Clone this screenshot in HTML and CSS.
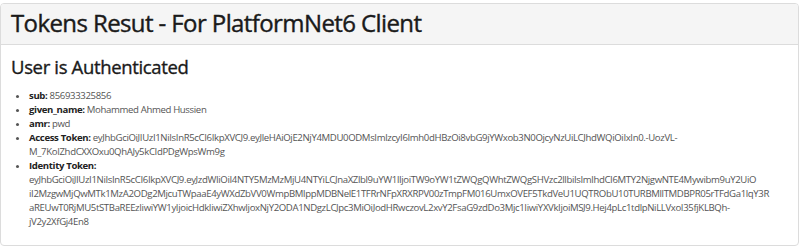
FILE: index.html
```html
<!DOCTYPE html>
<html lang="en">
<head>
<meta charset="utf-8">
<title>Tokens Resut</title>
<link rel="stylesheet" href="styles.css">
</head>
<body>
<div class="card">
  <div class="card-header">
    <h1 class="title">Tokens Resut - For PlatformNet6 Client</h1>
  </div>
  <div class="card-body">
    <h2 class="subtitle">User is Authenticated</h2>
    <ul class="claims">
      <li><strong>sub:</strong> 856933325856</li>
      <li><strong>given_name:</strong> Mohammed Ahmed Hussien</li>
      <li><strong>amr:</strong> pwd</li>
      <li><strong>Access Token:</strong> <span class="tok">eyJhbGciOiJIUzI1NiIsInR5cCI6IkpXVCJ9.eyJleHAiOjE2NjY4MDU0ODMsImlzcyI6Imh0dHBzOi8vbG9jYWxob3N0OjcyNzUiLCJhdWQiOiIxIn0.-UozVL-</span><br><span class="tok">M_7KoIZhdCXXOxu0QhAJy5kCIdPDgWpsWm9g</span></li>
      <li><strong>Identity Token:</strong><br><span class="tok">eyJhbGciOiJIUzI1NiIsInR5cCI6IkpXVCJ9.eyJzdWIiOiI4NTY5MzMzMjU4NTYiLCJnaXZlbl9uYW1lIjoiTW9oYW1tZWQgQWhtZWQgSHVzc2llbiIsImlhdCI6MTY2NjgwNTE4Mywibm9uY2UiO</span><br><span class="tok">iI2MzgwMjQwMTk1MzA2ODg2MjcuTWpaaE4yWXdZbVV0WmpBMlppMDBNelE1TFRrNFpXRXRPV00zTmpFM016UmxOVEF5TkdVeU1UQTRObU10TURBMllTMDBPR05rTFdGa1lqY3R</span><br><span class="tok">aREUwT0RjMU5tSTBaREEzIiwiYW1yIjoicHdkIiwiZXhwIjoxNjY2ODA1NDgzLCJpc3MiOiJodHRwczovL2xvY2FsaG9zdDo3Mjc1IiwiYXVkIjoiMSJ9.Hej4pLc1tdlpNiLLVxoI35fjKLBQh-</span><br><span class="tok">jV2y2XfGj4En8</span></li>
    </ul>
  </div>
</div>
</body>
</html>
```

FILE: styles.css
```css
* { box-sizing: border-box; }
html, body { margin: 0; padding: 0; background: #fff; }
body {
  font-family: "Open Sans", "Noto Sans", sans-serif;
  color: #555;
}
.card {
  margin: 3px 1px 0 0;
  height: 243px;
  border: 1px solid #dcdcdc;
  border-radius: 4px;
  overflow: hidden;
}
.card-header {
  background: #f5f5f5;
  border-bottom: 1px solid #dcdcdc;
  padding: 4px 10px 7px;
}
.title {
  margin: 0;
  font-size: 24px;
  line-height: 29px;
  font-weight: 400;
  letter-spacing: -0.6px;
  color: #1a1a1a;
  -webkit-text-stroke: 0.4px #1a1a1a;
}
.card-body {
  padding: 11px 10px 0;
}
.subtitle {
  margin: 0;
  font-size: 18.5px;
  line-height: 22px;
  font-weight: 400;
  letter-spacing: -0.35px;
  color: #1a1a1a;
  -webkit-text-stroke: 0.35px #1a1a1a;
}
.claims {
  margin: 11px 0 0;
  padding-left: 18px;
  font-size: 9.6px;
  line-height: 14px;
  letter-spacing: -0.36px;
  color: #555;
}
.claims strong {
  color: #222;
  font-weight: 700;
}
.tok { white-space: nowrap; }
```
